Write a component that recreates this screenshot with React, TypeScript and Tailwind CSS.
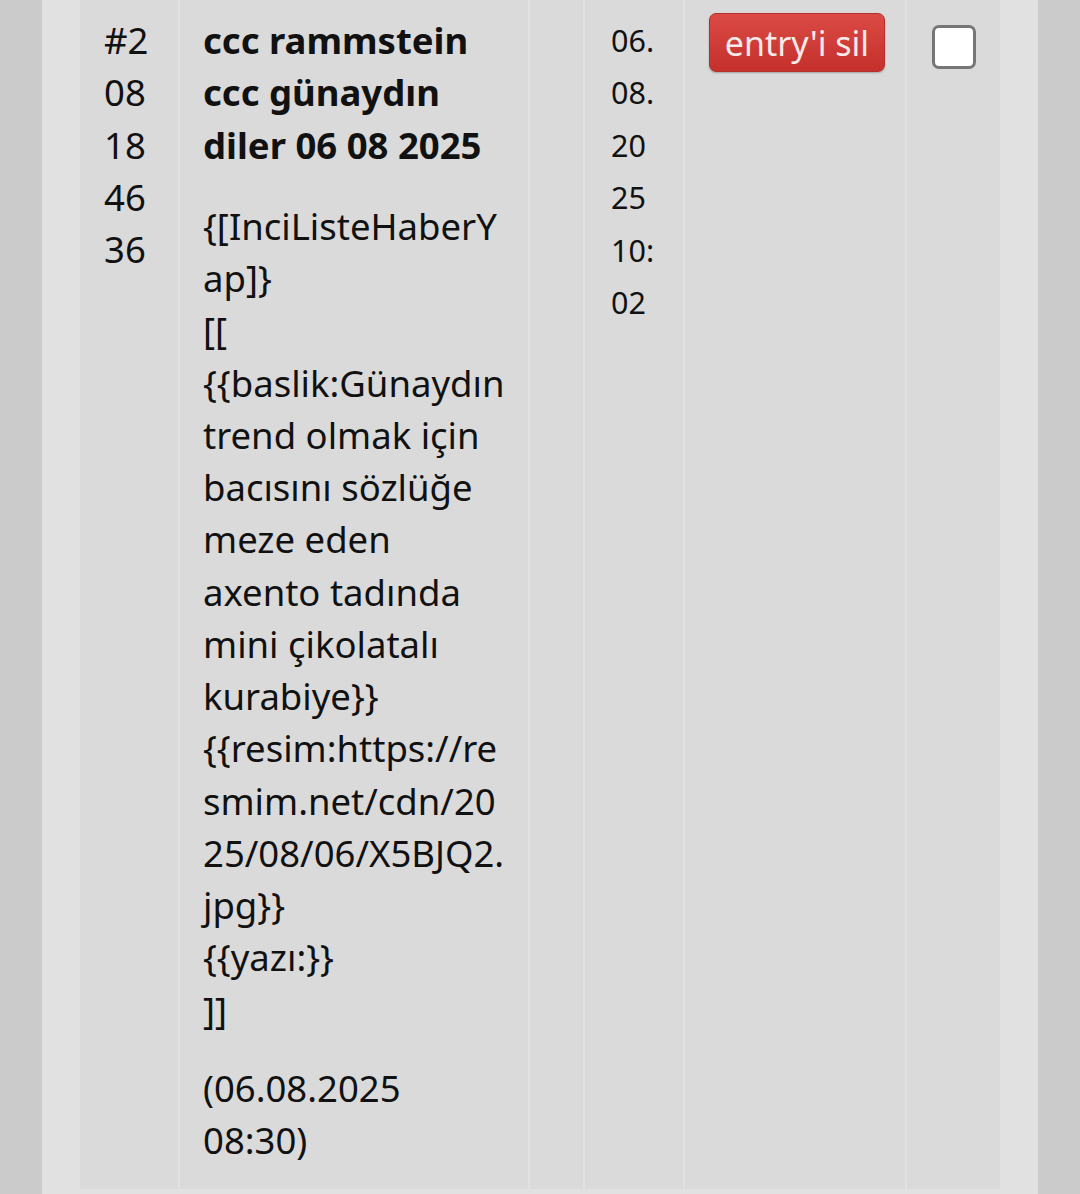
import React from "react";

const body = [
  "{[InciListeHaberYap]}",
  "[[",
  "{{baslik:Günaydın trend olmak için bacısını sözlüğe meze eden axento tadında mini çikolatalı kurabiye}}",
  "{{resim:https://resmim.net/cdn/2025/08/06/X5BJQ2.jpg}}",
  "{{yazı:}}",
  "]]",
];

export default function App() {
  return (
    <div
      className="w-[1080px] h-[1194px] overflow-hidden bg-[#cbcbcb] flex justify-center"
      style={{ fontFamily: '"Noto Sans", "Open Sans", sans-serif' }}
    >
      <div className="w-[996px] bg-[#e1e1e1] pl-[38px] pr-[38px]">
        <div className="flex gap-[2px] pb-[2px] text-[#111] text-[36.5px] leading-[52.25px]">
          <div className="w-[98px] shrink-0 bg-[#dadada] pl-[24px] pr-[22px] pt-[14px] break-all">
            #208184636
          </div>
          <div className="w-[348px] shrink-0 bg-[#dadada] pl-[23px] pr-[22px] pt-[14px] pb-[23px] [overflow-wrap:anywhere]">
            <div className="font-bold">ccc rammstein ccc günaydın diler 06 08 2025</div>
            <div className="mt-[29px]">
              {body.map((l, i) => (
                <div key={i}>{l}</div>
              ))}
            </div>
            <div className="mt-[26px]">(06.08.2025 08:30)</div>
          </div>
          <div className="w-[53px] shrink-0 bg-[#dadada]"></div>
          <div className="w-[98px] shrink-0 bg-[#dadada] pl-[26px] pr-[25px] pt-[14px] text-[30.5px] leading-[52.4px] break-all">
            06.08.2025 10:02
          </div>
          <div className="w-[220px] shrink-0 bg-[#dadada] pl-[24px] pt-[13px]">
            <button className="w-[176px] h-[59px] rounded-[7px] border border-[#b3302c] bg-gradient-to-b from-[#dc4a45] to-[#c4302b] text-[#f7eaea] text-[34px] leading-none shadow-[0_1px_2px_rgba(0,0,0,0.25)] pt-[1px]">
              entry'i sil
            </button>
          </div>
          <div className="w-[93px] shrink-0 bg-[#dadada] pl-[25px] pt-[25px]">
            <div className="w-[44px] h-[44px] rounded-[7px] border-[3px] border-[#767676] bg-white"></div>
          </div>
        </div>
      </div>
    </div>
  );
}
